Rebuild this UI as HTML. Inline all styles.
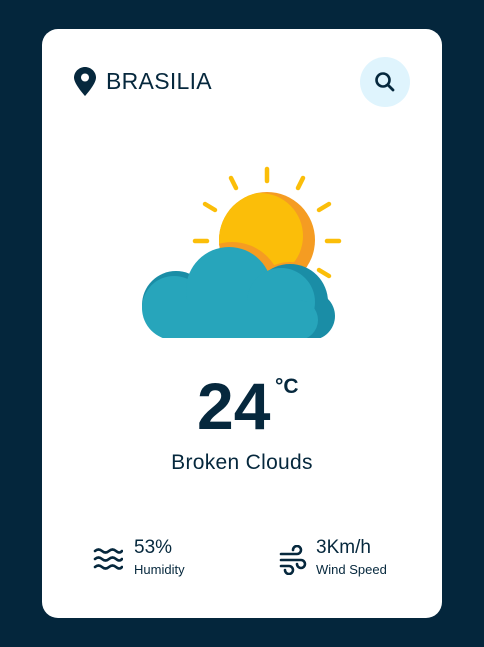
<!DOCTYPE html>
<html><head><meta charset="utf-8"><style>
*{margin:0;padding:0;box-sizing:border-box}
body{width:484px;height:647px;background:#04263c;font-family:"Liberation Sans",sans-serif;color:#06283d;position:relative;overflow:hidden}
.card{position:absolute;left:42px;top:29px;width:400px;height:589px;background:#fff;border-radius:16px}
.abs{position:absolute}
</style></head><body>
<div class="card"></div>
<svg class="abs" style="left:74px;top:67px" width="22" height="29" viewBox="0 0 22 29"><path d="M11 0C5 0 0 4.8 0 10.6 0 17 11 29 11 29S22 17 22 10.6C22 4.8 17 0 11 0Z" fill="#06283d"/><circle cx="11" cy="10.5" r="4" fill="#fff"/></svg>
<div class="abs" style="left:106px;top:68px;font-size:23px;letter-spacing:0.3px">BRASILIA</div>
<div class="abs" style="left:360px;top:57px;width:50px;height:50px;border-radius:50%;background:#dff4fd"></div>
<svg class="abs" style="left:373px;top:70px" width="24" height="24" viewBox="0 0 24 24"><circle cx="10" cy="10" r="6.5" fill="none" stroke="#06283d" stroke-width="2.6"/><path d="M15 15l5 5" stroke="#06283d" stroke-width="2.8" stroke-linecap="round"/></svg>
<svg class="abs" style="left:0;top:0" width="484" height="360" viewBox="0 0 484 360">
<g stroke="#fbbe09" stroke-width="4.5" stroke-linecap="round">
<line x1="267" y1="169" x2="267" y2="181"/>
<line x1="231" y1="178" x2="236" y2="188"/>
<line x1="303" y1="178" x2="298" y2="188"/>
<line x1="205" y1="204" x2="215" y2="210"/>
<line x1="329" y1="204" x2="319" y2="210"/>
<line x1="195" y1="241" x2="207" y2="241"/>
<line x1="327" y1="241" x2="339" y2="241"/>
<line x1="319" y1="270" x2="329" y2="276"/>
</g>
<circle cx="267" cy="240" r="48" fill="#f59c22"/>
<clipPath id="c"><circle cx="267" cy="240" r="48"/></clipPath>
<circle cx="260" cy="236" r="43" fill="#fbbe09" clip-path="url(#c)"/>
<circle cx="232" cy="292" r="50" fill="#f59c22" clip-path="url(#c)"/>
<circle cx="290" cy="302" r="40" fill="#f59c22" clip-path="url(#c)"/>
<clipPath id="b"><rect x="0" y="0" width="484" height="338"/></clipPath>
<g clip-path="url(#b)">
<g fill="#1a8da6">
<circle cx="176" cy="305" r="34"/>
<circle cx="290" cy="302" r="38"/>
<circle cx="311" cy="316" r="24"/>
</g>
<g fill="#27a5bb">
<circle cx="174" cy="308" r="32"/>
<circle cx="229" cy="290" r="43"/>
<circle cx="281" cy="302" r="34"/>
<circle cx="298" cy="320" r="20"/>
<rect x="174" y="300" width="124" height="40"/>
</g>
</g>
</svg>
<div class="abs" style="left:197px;top:373px;font-size:66px;font-weight:bold;line-height:1">24</div>
<div class="abs" style="left:275px;top:375px;font-size:21px;font-weight:bold">°C</div>
<div class="abs" style="left:0;width:484px;text-align:center;top:451px;font-size:21px;letter-spacing:0.3px">Broken Clouds</div>
<svg class="abs" style="left:93px;top:547px" width="30" height="24" viewBox="0 0 30 24" fill="none" stroke="#06283d" stroke-width="2.6" stroke-linecap="round"><path d="M2 4q3.5-3 7 0t7 0 7 0 6 0"/><path d="M2 12q3.5-3 7 0t7 0 7 0 6 0"/><path d="M2 20q3.5-3 7 0t7 0 7 0 6 0"/></svg>
<div class="abs" style="left:134px;top:537px;font-size:19px">53%</div>
<div class="abs" style="left:134px;top:562px;font-size:13px">Humidity</div>
<svg class="abs" style="left:279px;top:545px" width="28" height="30" viewBox="0 0 28 30" fill="none" stroke="#06283d" stroke-width="2.6" stroke-linecap="round"><path d="M2 9h16a4 4 0 1 0-4-4"/><path d="M2 15h20a4 4 0 1 1-4 4"/><path d="M2 21h8a4 4 0 1 1-4 4"/></svg>
<div class="abs" style="left:316px;top:537px;font-size:19px">3Km/h</div>
<div class="abs" style="left:316px;top:562px;font-size:13px">Wind Speed</div>
</body></html>
